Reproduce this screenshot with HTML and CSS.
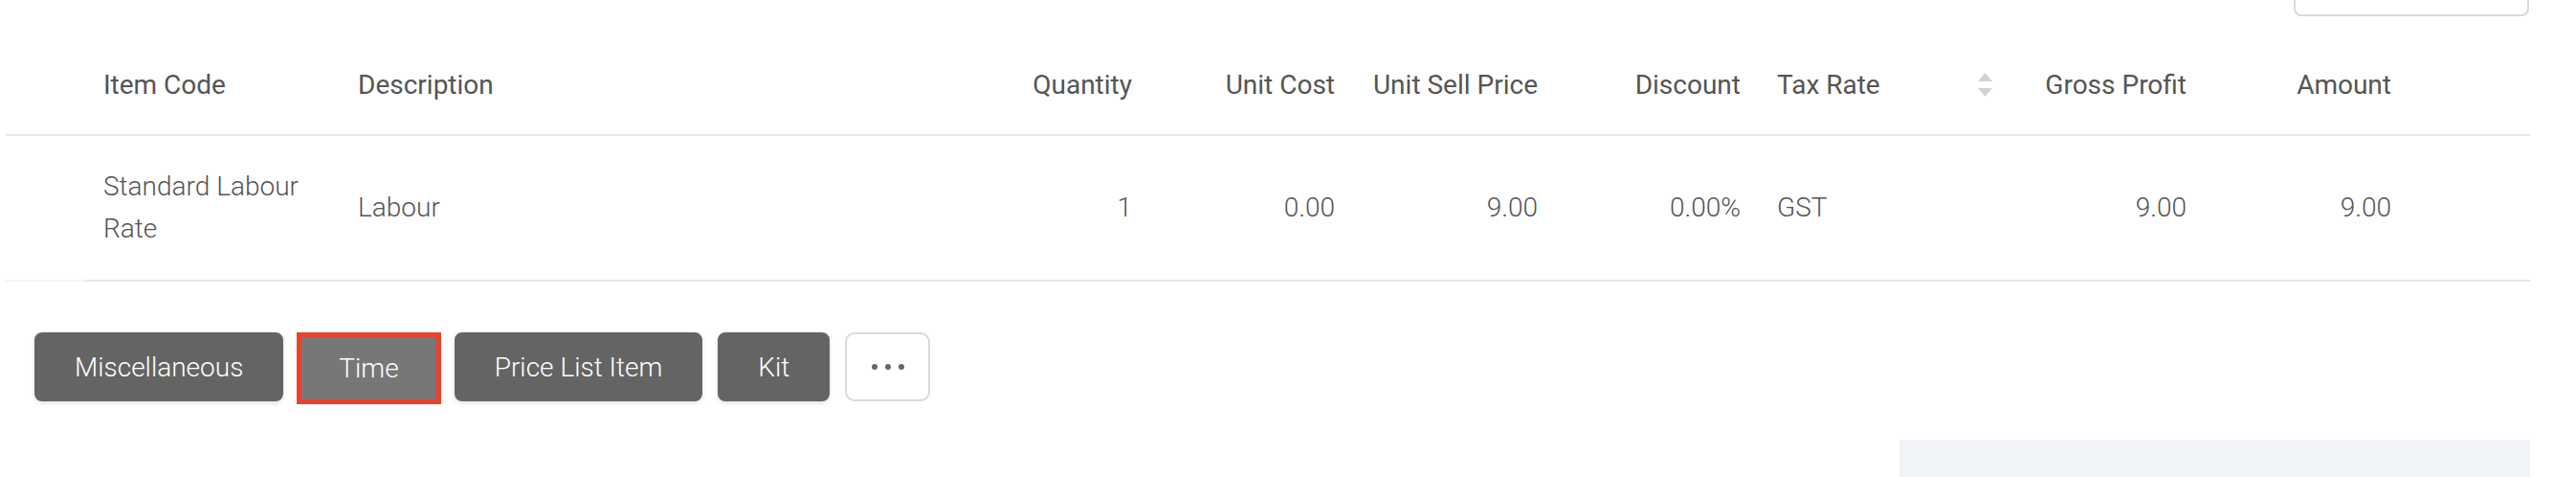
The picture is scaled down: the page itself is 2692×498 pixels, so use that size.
FILE: index.html
```html
<!DOCTYPE html>
<html lang="en">
<head>
<meta charset="utf-8">
<title>Invoice lines</title>
<link rel="stylesheet" href="styles.css">
</head>
<body>
<div class="topbar">
  <div class="search-box"></div>
</div>

<div class="lines">
  <div class="row head">
    <div class="cell c-handle"></div>
    <div class="cell c-left">Item Code</div>
    <div class="cell c-left">Description</div>
    <div class="cell c-right">Quantity</div>
    <div class="cell c-right">Unit Cost</div>
    <div class="cell c-right">Unit Sell Price</div>
    <div class="cell c-right">Discount</div>
    <div class="cell c-tax">
      <span>Tax Rate</span>
      <svg class="sort" width="15" height="25" viewBox="0 0 15 25" aria-hidden="true">
        <polygon points="7.5,0 15,9 0,9" fill="#d2d2d2"/>
        <polygon points="0,16 15,16 7.5,25" fill="#d2d2d2"/>
      </svg>
    </div>
    <div class="cell c-right">Gross Profit</div>
    <div class="cell c-right">Amount</div>
    <div class="cell c-actions"></div>
  </div>

  <div class="row body">
    <div class="cell c-handle"></div>
    <div class="cell c-left c-wrap">Standard Labour Rate</div>
    <div class="cell c-left">Labour</div>
    <div class="cell c-right">1</div>
    <div class="cell c-right">0.00</div>
    <div class="cell c-right">9.00</div>
    <div class="cell c-right">0.00%</div>
    <div class="cell c-tax"><span>GST</span></div>
    <div class="cell c-right">9.00</div>
    <div class="cell c-right">9.00</div>
    <div class="cell c-actions"></div>
  </div>
</div>

<div class="add-bar">
  <button class="btn">Miscellaneous</button>
  <button class="btn btn-active">Time</button>
  <button class="btn">Price List Item</button>
  <button class="btn">Kit</button>
  <button class="btn-more" aria-label="More"><span class="dot"></span><span class="dot"></span><span class="dot"></span></button>
</div>

<div class="totals-wrap">
  <div class="totals"></div>
</div>
</body>
</html>
```

FILE: styles.css
```css
* {
  box-sizing: border-box;
}

html, body {
  margin: 0;
  padding: 0;
  background: #ffffff;
}

body {
  font-family: Roboto, "Liberation Sans", Arial, sans-serif;
  font-size: 28px;
  color: #555555;
  overflow: hidden;
}

.topbar {
  height: 17px;
  overflow: hidden;
  display: flex;
  justify-content: flex-end;
  align-items: flex-end;
  padding-right: 49px;
}

.search-box {
  flex-shrink: 0;
  width: 246px;
  height: 60px;
  border: 2px solid #d9d9d9;
  border-radius: 8px;
  background: #ffffff;
}

.lines {
  margin-left: 6px;
  width: 2638px;
  margin-top: 20px;
}

.row {
  display: grid;
  grid-template-columns: 82px 266px 637px 212px 212px 212px 212px 254px 212px 214px 125px;
}

.row.head {
  height: 105px;
  border-bottom: 2px solid #e6e6ea;
  font-weight: 400;
  color: #555555;
  white-space: nowrap;
}

.row.body {
  height: 152px;
  font-weight: 300;
  color: #555555;
  line-height: 44px;
  white-space: nowrap;
}

.row.body .c-wrap {
  white-space: normal;
}

.row.body .cell {
  border-bottom: 2px solid #e6e6ea;
}

.row.body .c-handle {
  border-bottom-color: #f3f3f5;
}

.cell {
  display: flex;
  align-items: center;
  min-width: 0;
}

.c-left {
  padding: 0 20px;
}

.c-right {
  padding: 0 20px;
  justify-content: flex-end;
}

.c-tax {
  padding: 0 11px 0 18px;
  justify-content: space-between;
}

.sort {
  display: block;
  flex-shrink: 0;
}

.add-bar {
  display: flex;
  align-items: flex-start;
  gap: 16px;
  margin-top: 53px;
  padding-left: 36px;
}

.btn {
  font-family: Roboto, "Liberation Sans", Arial, sans-serif;
  font-size: 28px;
  font-weight: 300;
  color: #ffffff;
  background: #646464;
  border: 2px solid #646464;
  border-radius: 8px;
  height: 72px;
  padding: 0 40px;
  box-shadow: 0 2px 5px rgba(0, 0, 0, 0.12);
  cursor: pointer;
  white-space: nowrap;
}

.btn-active {
  background: #777777;
  border: 5px solid #e8412c;
  border-radius: 0;
  height: 75px;
  padding: 0 39px;
  margin: 0 -2px;
  box-shadow: none;
}

.btn-more {
  display: flex;
  align-items: center;
  justify-content: center;
  gap: 8px;
  width: 89px;
  height: 72px;
  background: #ffffff;
  border: 2px solid #d9d9d9;
  border-radius: 10px;
  padding: 0;
  cursor: pointer;
}

.dot {
  width: 6px;
  height: 6px;
  border-radius: 50%;
  background: #666666;
}

.totals-wrap {
  margin-left: 6px;
  width: 2638px;
  margin-top: 37px;
  display: flex;
  justify-content: flex-end;
}

.totals {
  width: 659px;
  height: 39px;
  background: #f2f5f8;
}
```
